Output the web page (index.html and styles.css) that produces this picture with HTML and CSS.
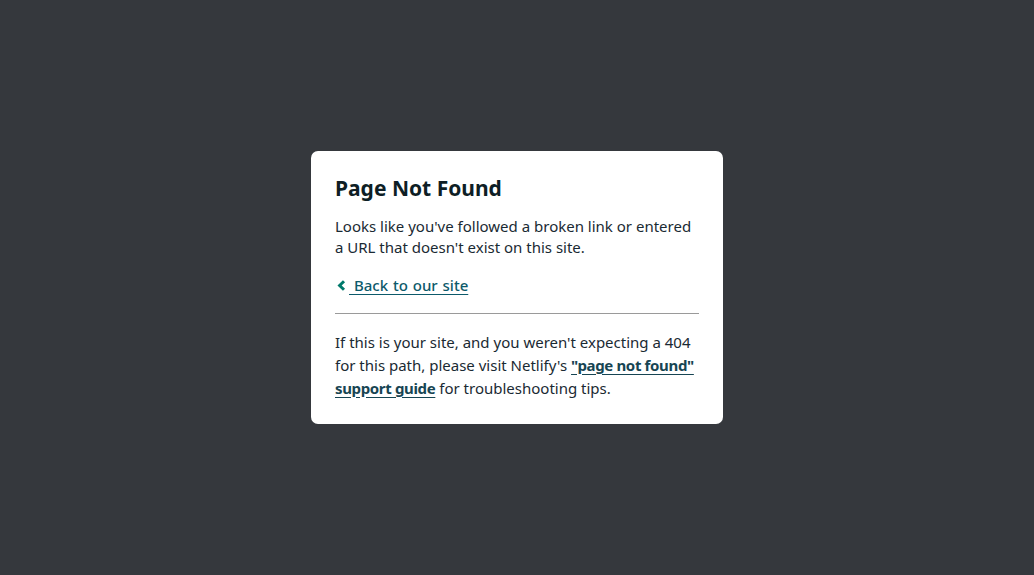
FILE: index.html
```html
<!DOCTYPE html>
<html lang="en">
<head>
<meta charset="utf-8">
<title>Page Not Found</title>
<link rel="stylesheet" href="styles.css">
</head>
<body>
<main class="page">
  <div class="card">
    <h1 class="title">Page Not Found</h1>
    <p class="lead">Looks like you've followed a broken link or entered a URL that doesn't exist on this site.</p>
    <p class="back"><a class="back-link" href="#"><svg class="chev" viewBox="0 0 9 11" width="9" height="11" aria-hidden="true"><path d="M7 1.2 L2.6 5.5 L7 9.8" fill="none" stroke="#00796b" stroke-width="3"/></svg><span class="back-text"> Back to our site</span></a></p>
    <hr class="rule">
    <p class="note">If this is your site, and you weren't expecting a 404 for this path, please visit Netlify's <a class="guide" href="#">"page not found" support guide</a> for troubleshooting tips.</p>
  </div>
</main>
</body>
</html>
```
FILE: styles.css
```css
html, body {
  margin: 0;
  padding: 0;
  height: 100%;
}
body {
  background: #35383d;
  font-family: "Noto Sans", "Open Sans", sans-serif;
  color: #1a2a33;
}
.page {
  min-height: 100%;
  display: flex;
  align-items: center;
  justify-content: center;
}
.card {
  box-sizing: border-box;
  width: 412px;
  background: #ffffff;
  border-radius: 7px;
  padding: 23px 24px 24px;
}
.title {
  margin: 0;
  font-size: 21px;
  line-height: 28px;
  font-weight: 700;
  color: #0e1e25;
}
.lead {
  margin: 14px 0 0;
  font-size: 15px;
  line-height: 21px;
}
.back {
  margin: 17px 0 0;
  font-size: 15px;
  line-height: 21px;
}
.back-link {
  color: #0d5a6b;
  font-weight: 500;
  text-decoration: none;
}
.back-text {
  text-decoration: underline;
  text-underline-offset: 3px;
  word-spacing: 1px;
}
.chev {
  display: inline-block;
  vertical-align: 0;
  margin: 0 3px 0 2px;
}
.rule {
  margin: 17px 0 0;
  border: 0;
  border-top: 1px solid #9a9a9a;
  height: 0;
}
.note {
  margin: 17px 0 0;
  font-size: 15px;
  line-height: 23px;
}
.guide {
  color: #174553;
  font-weight: 700;
  letter-spacing: -0.35px;
  text-decoration: underline;
  text-underline-offset: 3px;
}
```
